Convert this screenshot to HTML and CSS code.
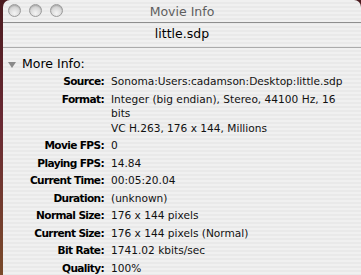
FILE: index.html
```html
<!DOCTYPE html>
<html lang="en">
<head>
    <meta charset="UTF-8">
    <title>Movie Info</title>
    <link rel="stylesheet" href="styles.css">
</head>
<body>
    <div class="window">
        <!-- Barra de título -->
        <div class="titlebar">
            <div class="lights">
                <span class="light"></span>
                <span class="light"></span>
                <span class="light"></span>
            </div>
            <div class="title">Movie Info</div>
        </div>

        <div class="filename">little.sdp</div>

        <div class="section">
            <div class="disclosure">
                <span class="triangle"></span>
                <span>More Info:</span>
            </div>

            <div class="info">
                <div class="label">Source:</div>
                <div class="value">Sonoma:Users:cadamson:Desktop:little.sdp</div>

                <div class="label">Format:</div>
                <div class="value">Integer (big endian), Stereo, 44100 Hz, 16<br>bits<br>VC H.263, 176 x 144, Millions</div>

                <div class="label">Movie FPS:</div>
                <div class="value">0</div>

                <div class="label">Playing FPS:</div>
                <div class="value">14.84</div>

                <div class="label">Current Time:</div>
                <div class="value">00:05:20.04</div>

                <div class="label">Duration:</div>
                <div class="value">(unknown)</div>

                <div class="label">Normal Size:</div>
                <div class="value">176 x 144 pixels</div>

                <div class="label">Current Size:</div>
                <div class="value">176 x 144 pixels (Normal)</div>

                <div class="label">Bit Rate:</div>
                <div class="value">1741.02 kbits/sec</div>

                <div class="label">Quality:</div>
                <div class="value">100%</div>
            </div>
        </div>
    </div>
</body>
</html>
```

FILE: styles.css
```css
/* Fondo del escritorio */
body {
    margin: 0;
    height: 275px;
    overflow: hidden;
    background: linear-gradient(#4a1a1e, #6b2a34 45%, #7a4a2a);
    font-family: "DejaVu Sans", sans-serif;
}

/* Ventana */
.window {
    margin-left: 3px;
    height: 275px;
    border-radius: 7px 7px 0 0;
    background: repeating-linear-gradient(#f0f0f0 0 2px, #e9e9e9 2px 4px);
    overflow: hidden;
}

.titlebar {
    position: relative;
    height: 22px;
    border-bottom: 1px solid #8e8e8e;
    display: flex;
    align-items: center;
    justify-content: center;
}

.lights {
    position: absolute;
    left: 5px;
    top: 4px;
    display: flex;
    gap: 8px;
}

.light {
    width: 11px;
    height: 11px;
    border-radius: 50%;
    border: 1px solid #9a9a9a;
    background: radial-gradient(circle at 50% 75%, #f4f4f4 0, #d8d8d8 55%, #b8b8b8 100%);
    box-shadow: inset 0 1px 1px rgba(0, 0, 0, 0.15);
}

.title {
    font-size: 12.5px;
    color: #5e5e5e;
}

.filename {
    height: 24px;
    line-height: 22px;
    text-align: center;
    font-size: 12.5px;
    color: #000;
    border-bottom: 1px solid #ababab;
}

.section {
    padding-top: 7px;
}

.disclosure {
    display: flex;
    align-items: center;
    gap: 6px;
    padding-left: 5px;
    height: 16px;
    font-size: 12.5px;
    color: #000;
}

.triangle {
    width: 0;
    height: 0;
    border-left: 4.5px solid transparent;
    border-right: 4.5px solid transparent;
    border-top: 6px solid #8a8a8a;
    margin-top: 4px;
}

.info {
    display: grid;
    grid-template-columns: 101px 1fr;
    column-gap: 7px;
    row-gap: 3px;
    padding-top: 3px;
    font-size: 10.6px;
    line-height: 14.5px;
    color: #000;
}

.label {
    text-align: right;
    font-weight: bold;
    letter-spacing: -0.65px;
}

.value {
    color: #111;
}
```
